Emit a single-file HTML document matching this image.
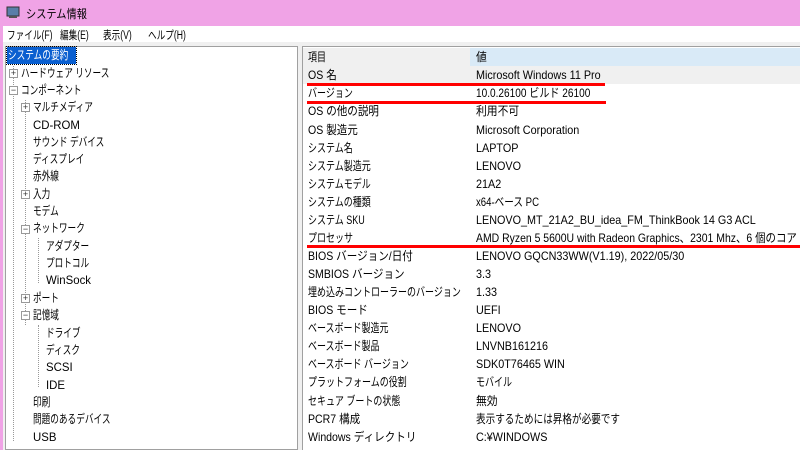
<!DOCTYPE html>
<html><head><meta charset="utf-8"><style>
*{margin:0;padding:0;box-sizing:border-box}
body{width:800px;height:450px;overflow:hidden;background:#f0a3e6;font-family:"Liberation Sans","Noto Sans CJK JP",sans-serif;font-size:12px;color:#000;position:relative}
.title{position:absolute;left:0;top:0;width:800px;height:26px;background:#f0a3e6}
.title span{position:absolute;left:26px;top:5px;font-size:12px;transform:scaleX(.85);transform-origin:left}
.menu{position:absolute;left:3px;top:26px;width:797px;height:16px;background:#fff;overflow:hidden}
.menu span{position:absolute;top:1px;font-size:11.5px;transform:scaleX(.75);transform-origin:left;white-space:nowrap}
.main{position:absolute;left:3px;top:42px;width:797px;height:408px;background:#f0f0f0}
.left{position:absolute;left:5px;top:46px;width:293px;height:404px;background:#fff;border:1px solid #a0a0a0}
.right{position:absolute;left:302px;top:46px;width:498px;height:404px;background:#fff;border-left:1px solid #a0a0a0;border-top:1px solid #a0a0a0}
.t{position:absolute;white-space:nowrap;line-height:17px;transform:scaleX(.72);transform-origin:left}
.t.l{transform:scaleX(.95)}
.rows{position:absolute;left:0;top:0;width:800px;height:450px;overflow:hidden}
.r{position:absolute;left:303px;width:497px;height:18px;overflow:hidden}
.r span{position:absolute;top:1px;white-space:nowrap;line-height:17px;transform-origin:left}
.r span:nth-of-type(1){left:5px;transform:scaleX(.75)}
.r span:nth-of-type(2){left:173px;transform:scaleX(.9)}
.r span.m{transform:scaleX(.88)!important}
.red{position:absolute;height:3px;background:#f00}
.pl{position:absolute;width:9px;height:9px;border:1px solid #999;background:#fff;font-size:9px;line-height:7px;text-align:center;color:#333}
.dv{position:absolute;border-left:1px dotted #999}
</style></head><body>
<div class="title"><svg style="position:absolute;left:6px;top:6px" width="15" height="13"><rect x="1" y="1" width="12" height="9" fill="#5a7ea8" stroke="#333"/><rect x="3" y="10" width="8" height="2" fill="#555"/></svg><span>システム情報</span></div>
<div class="menu"><span style="left:4px">ファイル(F)</span><span style="left:57px">編集(E)</span><span style="left:100px">表示(V)</span><span style="left:145px">ヘルプ(H)</span></div>
<div class="main"></div>
<div class="left"></div>
<div style="position:absolute;left:7px;top:47px;width:69px;height:17px;background:#0a5fd0;outline:1px dotted #000"></div>
<div class="t" style="left:8px;top:47px;color:#fff">システムの要約</div>
<div class="dv" style="left:13px;top:66px;height:375px"></div>
<div class="dv" style="left:25px;top:100px;height:225px"></div>
<div class="dv" style="left:38px;top:238px;height:45px"></div>
<div class="dv" style="left:38px;top:325px;height:62px"></div>
<div class="pl" style="left:9px;top:69px">+</div>
<div class="pl" style="left:9px;top:86px">−</div>
<div class="pl" style="left:21px;top:103px">+</div>
<div class="pl" style="left:21px;top:190px">+</div>
<div class="pl" style="left:21px;top:225px">−</div>
<div class="pl" style="left:21px;top:294px">+</div>
<div class="pl" style="left:21px;top:311px">−</div>
<div class="t" style="left:21px;top:65px">ハードウェア リソース</div>
<div class="t" style="left:21px;top:82px">コンポーネント</div>
<div class="t" style="left:33px;top:99px">マルチメディア</div>
<div class="t l" style="left:33px;top:117px">CD-ROM</div>
<div class="t" style="left:33px;top:134px">サウンド デバイス</div>
<div class="t" style="left:33px;top:151px">ディスプレイ</div>
<div class="t" style="left:33px;top:168px">赤外線</div>
<div class="t" style="left:33px;top:186px">入力</div>
<div class="t" style="left:33px;top:203px">モデム</div>
<div class="t" style="left:33px;top:220px">ネットワーク</div>
<div class="t" style="left:46px;top:238px">アダプター</div>
<div class="t" style="left:46px;top:255px">プロトコル</div>
<div class="t l" style="left:46px;top:272px">WinSock</div>
<div class="t" style="left:33px;top:290px">ポート</div>
<div class="t" style="left:33px;top:307px">記憶域</div>
<div class="t" style="left:46px;top:325px">ドライブ</div>
<div class="t" style="left:46px;top:342px">ディスク</div>
<div class="t l" style="left:46px;top:359px">SCSI</div>
<div class="t l" style="left:46px;top:377px">IDE</div>
<div class="t" style="left:33px;top:394px">印刷</div>
<div class="t" style="left:33px;top:411px">問題のあるデバイス</div>
<div class="t l" style="left:33px;top:429px">USB</div>
<div class="right"></div>
<div class="r" style="top:48px;background:#f0f0f0"><div style="position:absolute;left:167px;top:0;width:330px;height:18px;background:#d9eaf7"></div><span>項目</span><span>値</span></div>
<div class="r" style="top:66px;background:#f0f0f0"><span class="m">OS 名</span><span>Microsoft Windows 11 Pro</span></div>
<div class="r" style="top:84px"><span>バージョン</span><span style="transform:scaleX(.84)">10.0.26100 ビルド 26100</span></div>
<div class="r" style="top:102px"><span class="m">OS の他の説明</span><span>利用不可</span></div>
<div class="r" style="top:121px"><span class="m">OS 製造元</span><span>Microsoft Corporation</span></div>
<div class="r" style="top:139px"><span>システム名</span><span>LAPTOP</span></div>
<div class="r" style="top:157px"><span>システム製造元</span><span>LENOVO</span></div>
<div class="r" style="top:175px"><span>システムモデル</span><span>21A2</span></div>
<div class="r" style="top:193px"><span>システムの種類</span><span style="transform:scaleX(.8)">x64-ベース PC</span></div>
<div class="r" style="top:211px"><span>システム SKU</span><span>LENOVO_MT_21A2_BU_idea_FM_ThinkBook 14 G3 ACL</span></div>
<div class="r" style="top:229px"><span>プロセッサ</span><span style="transform:scaleX(.87)">AMD Ryzen 5 5600U with Radeon Graphics、2301 Mhz、6 個のコア</span></div>
<div class="r" style="top:247px"><span class="m">BIOS バージョン/日付</span><span>LENOVO GQCN33WW(V1.19), 2022/05/30</span></div>
<div class="r" style="top:265px"><span class="m">SMBIOS バージョン</span><span>3.3</span></div>
<div class="r" style="top:283px"><span>埋め込みコントローラーのバージョン</span><span>1.33</span></div>
<div class="r" style="top:301px"><span class="m">BIOS モード</span><span>UEFI</span></div>
<div class="r" style="top:319px"><span>ベースボード製造元</span><span>LENOVO</span></div>
<div class="r" style="top:337px"><span>ベースボード製品</span><span>LNVNB161216</span></div>
<div class="r" style="top:355px"><span>ベースボード バージョン</span><span>SDK0T76465 WIN</span></div>
<div class="r" style="top:373px"><span>プラットフォームの役割</span><span style="transform:scaleX(.75)">モバイル</span></div>
<div class="r" style="top:392px"><span>セキュア ブートの状態</span><span>無効</span></div>
<div class="r" style="top:410px"><span class="m">PCR7 構成</span><span style="transform:scaleX(.8)">表示するためには昇格が必要です</span></div>
<div class="r" style="top:428px"><span class="m">Windows ディレクトリ</span><span>C:¥WINDOWS</span></div>
<div class="red" style="left:307px;top:83px;width:298px"></div>
<div class="red" style="left:307px;top:101px;width:299px"></div>
<div class="red" style="left:307px;top:245px;width:493px"></div>
</body></html>
